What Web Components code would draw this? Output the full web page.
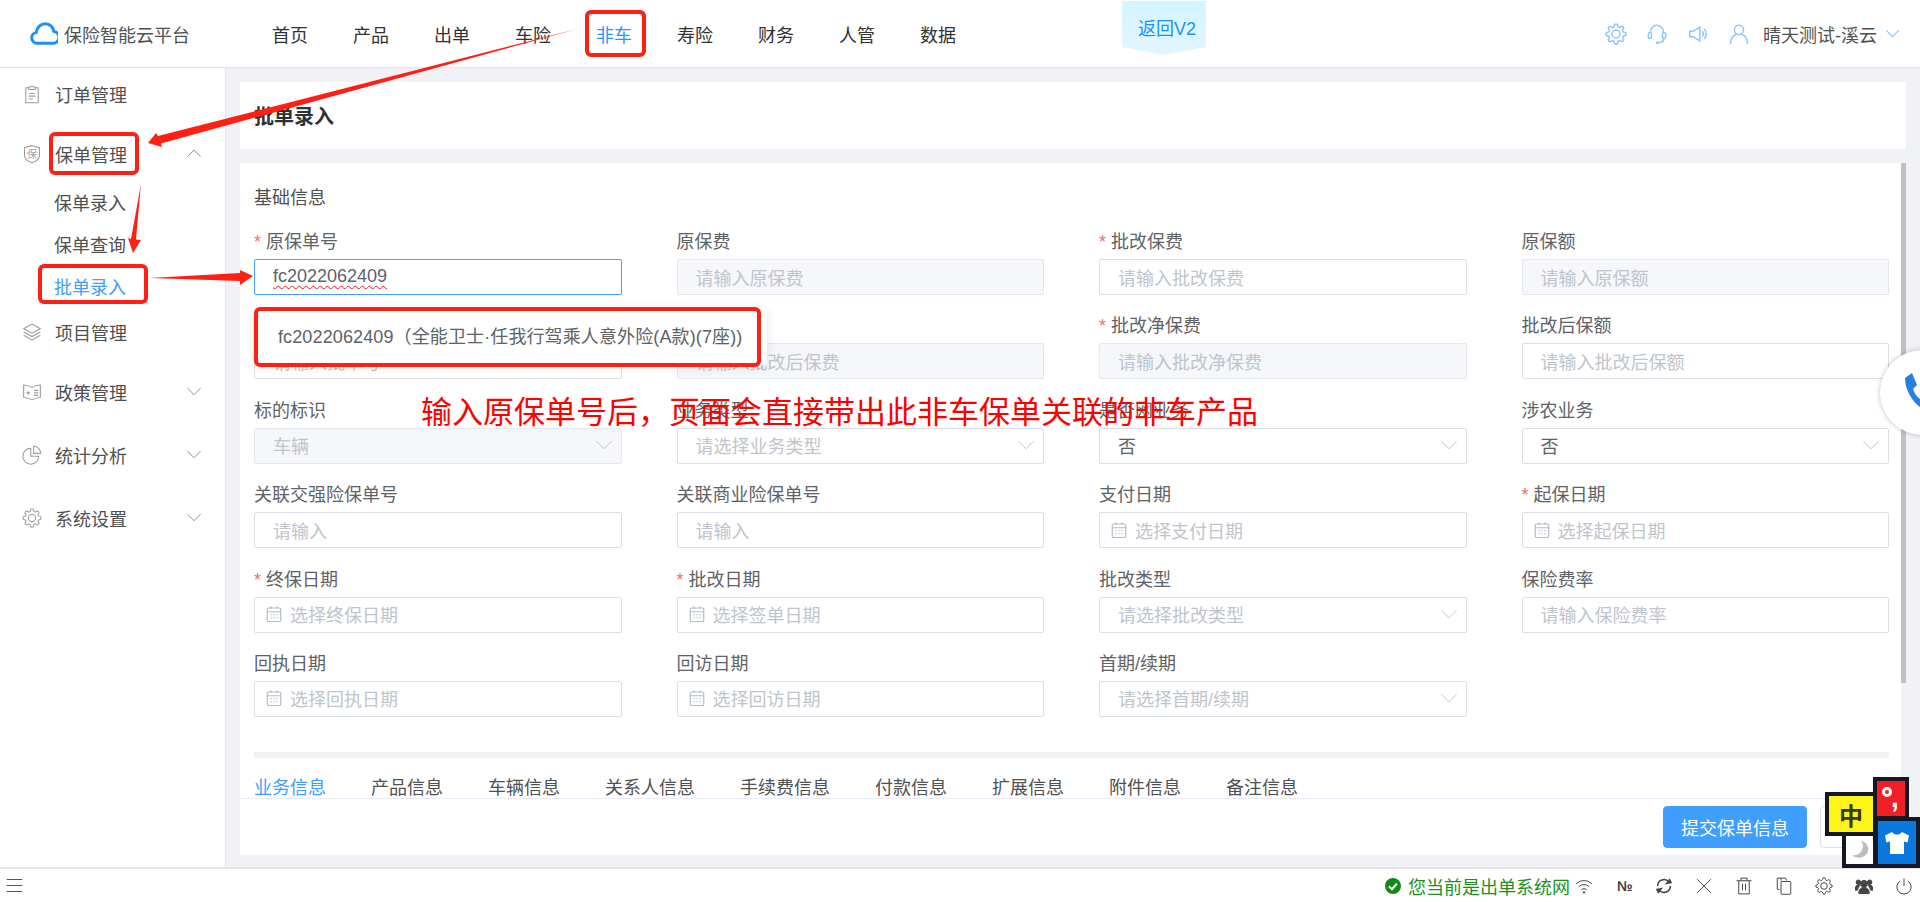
<!DOCTYPE html>
<html lang="zh">
<head>
<meta charset="utf-8">
<title>批单录入</title>
<style>
    html, body { margin: 0; height: 100%; overflow: hidden; }
    body {
        font-family: "Liberation Sans", "Noto Sans CJK SC", sans-serif;
        font-size: 18px;
        color: #606266;
        background: #fff;
    }
</style>
</head>
<body>
<app-shell>
    <app-header slot="header"></app-header>
    <side-menu slot="menu"></side-menu>
    <page-title slot="title">批单录入</page-title>
    <form-card slot="form">
        <form-field req focus value="fc2022062409">原保单号</form-field>
        <form-field disabled placeholder="请输入原保费">原保费</form-field>
        <form-field req placeholder="请输入批改保费">批改保费</form-field>
        <form-field disabled placeholder="请输入原保额">原保额</form-field>

        <form-field placeholder="请输入批单号">批单号</form-field>
        <form-field disabled placeholder="请输入批改后保费">批改后保费</form-field>
        <form-field req disabled placeholder="请输入批改净保费">批改净保费</form-field>
        <form-field placeholder="请输入批改后保额">批改后保额</form-field>

        <form-field type="select" disabled placeholder="车辆">标的标识</form-field>
        <form-field type="select" placeholder="请选择业务类型">业务类型</form-field>
        <form-field type="select" value="否">是否网业务</form-field>
        <form-field type="select" value="否">涉农业务</form-field>

        <form-field placeholder="请输入">关联交强险保单号</form-field>
        <form-field placeholder="请输入">关联商业险保单号</form-field>
        <form-field type="date" placeholder="选择支付日期">支付日期</form-field>
        <form-field req type="date" placeholder="选择起保日期">起保日期</form-field>

        <form-field req type="date" placeholder="选择终保日期">终保日期</form-field>
        <form-field req type="date" placeholder="选择签单日期">批改日期</form-field>
        <form-field type="select" placeholder="请选择批改类型">批改类型</form-field>
        <form-field placeholder="请输入保险费率">保险费率</form-field>

        <form-field type="date" placeholder="选择回执日期">回执日期</form-field>
        <form-field type="date" placeholder="选择回访日期">回访日期</form-field>
        <form-field type="select" placeholder="请选择首期/续期">首期/续期</form-field>
    </form-card>
    <status-bar slot="status"></status-bar>
</app-shell>
<suggest-popup>fc2022062409（全能卫士·任我行驾乘人意外险(A款)(7座))</suggest-popup>
<call-bubble></call-bubble>
<ime-widget></ime-widget>
<red-notes>输入原保单号后，页面会直接带出此非车保单关联的非车产品</red-notes>

<script>
const GEAR = 'M19.4 15a1.65 1.65 0 00.33 1.82l.06.06a2 2 0 010 2.83 2 2 0 01-2.83 0l-.06-.06a1.65 1.65 0 00-1.82-.33 1.65 1.65 0 00-1 1.51V21a2 2 0 01-2 2 2 2 0 01-2-2v-.09A1.65 1.65 0 009 19.4a1.65 1.65 0 00-1.82.33l-.06.06a2 2 0 01-2.83 0 2 2 0 010-2.83l.06-.06a1.65 1.65 0 00.33-1.82 1.65 1.65 0 00-1.51-1H3a2 2 0 01-2-2 2 2 0 012-2h.09A1.65 1.65 0 004.6 9a1.65 1.65 0 00-.33-1.82l-.06-.06a2 2 0 010-2.83 2 2 0 012.83 0l.06.06a1.65 1.65 0 001.82.33H9a1.65 1.65 0 001-1.51V3a2 2 0 012-2 2 2 0 012 2v.09a1.65 1.65 0 001 1.51 1.65 1.65 0 001.82-.33l.06-.06a2 2 0 012.83 0 2 2 0 010 2.83l-.06.06a1.65 1.65 0 00-.33 1.82V9a1.65 1.65 0 001.51 1H21a2 2 0 012 2 2 2 0 01-2 2h-.09a1.65 1.65 0 00-1.51 1z';

const ICONS = {
    gear: `<path d="${GEAR}"/><circle cx="12" cy="12" r="4.4"/>`,
    headset: `<path d="M5 11V9.5a7 7 0 0114 0V11"/><rect x="2.5" y="10.5" width="3.5" height="6.5" rx="1.7"/><rect x="18" y="10.5" width="3.5" height="6.5" rx="1.7"/><path d="M19.5 17c0 3-2.5 4.5-6 4.5"/><circle cx="12.5" cy="21.5" r=".8"/>`,
    speaker: `<path d="M3 9h4l7-4.5v15L7 15H3z"/><path d="M16.5 9a4.5 4.5 0 010 6"/><path d="M18.8 6.500a8 8 0 010 11"/>`,
    user: `<circle cx="12" cy="7.5" r="5"/><path d="M2.500 23c.5-6 3-9.500 6.200-10.500M21.500 23c-.5-6-3-9.500-6.200-10.500"/>`,
    down: `<path d="M2 7l10 10L22 7"/>`,
    up: `<path d="M2 17L12 7l10 10"/>`,
    clip: `<path d="M8 4.5H4.500v18h15v-18H16"/><path d="M8 6.500V3.500h2.500a1.700 1.700 0 013 0H16v3z"/><path d="M8 11h8M8 14.5h8M8 18h5"/>`,
    shield: `<path d="M12 2l9 2.500v9.500c0 4-5 7-9 8.500-4-1.500-9-4.500-9-8.500V4.500z"/><text x="12" y="16.500" font-size="12" text-anchor="middle" fill="currentColor" stroke="none">保</text>`,
    layers: `<path d="M12 2.500l10 5.500-10 5.500L2 8z"/><path d="M2 12l10 5.500L22 12"/><path d="M2 16l10 5.500L22 16"/>`,
    book: `<path d="M2 3.500c4 0 7 1 10 3 3-2 6-3 10-3v15c-4 0-7 1-10 3-3-2-6-3-10-3z"/><path d="M14.500 10h5M14.500 13h5M14.500 16h5"/><path d="M7.500 10.500l.8 1.600 1.700.2-1.200 1.200.3 1.700-1.600-.8-1.600.8.3-1.700L5 12.300l1.700-.2z" fill="currentColor" stroke="none"/>`,
    pie: `<path d="M10.500 4a9.500 9.500 0 109.500 9.500h-9.500z"/><path d="M14 1.500a8.500 8.500 0 018.500 8.500H14z"/>`,
    calendar: `<rect x="3" y="4" width="18" height="18" rx="1.500"/><path d="M3 9h18M8 1.500V5M16 1.500V5M7 13h2M11 13h2M15 13h2M7 17h2M11 17h2M15 17h2"/>`,
    menu: `<path d="M1 3.500h22M1 12h22M1 20.500h22"/>`,
    wifi: `<path d="M1.500 9a15 15 0 0121 0M5 13a10 10 0 0114 0M8.500 17a5 5 0 017 0"/><circle cx="12" cy="20.500" r="1" fill="currentColor"/>`,
    refresh: `<path d="M3.500 12a8.500 8.500 0 0115-5.500"/><path d="M20.500 12a8.500 8.500 0 01-15 5.500"/><path d="M21.500 7.500l-6 1 4-5z" fill="currentColor"/><path d="M2.500 16.500l6-1-4 5z" fill="currentColor"/>`,
    close: `<path d="M3 3l18 18M21 3L3 21"/>`,
    trash: `<path d="M2 5h20M5 5v17.500h14V5"/><path d="M8 5V1.500h8V5"/><path d="M10 9v9M14 9v9"/>`,
    copy: `<path d="M8 5V1.500H3v15h3"/><path d="M8 1.500h6l1.500 3"/><rect x="8" y="6" width="13" height="17" rx="1"/>`,
    power: `<path d="M12 2v10"/><path d="M6.500 5.500a9.500 9.500 0 1011 0"/>`,
    group: `<circle cx="12" cy="9" r="4.500" fill="currentColor"/><circle cx="4.500" cy="7" r="3" fill="currentColor"/><circle cx="19.500" cy="7" r="3" fill="currentColor"/><path d="M5 22c0-5 2.500-8 7-8s7 3 7 8z" fill="currentColor"/><path d="M0 17c0-4 1.500-6.500 5-6.500 1 0 1.500.3 2 .6C5 13 3.500 15 3.500 17.500H0zM24 17c0-4-1.500-6.500-5-6.500-1 0-1.500.3-2 .6 2 1.900 3.500 3.900 3.500 6.400H24z" fill="currentColor"/>`
};

const icon = (name, size, width = 1.5) =>
    `<svg width="${size}" height="${size}" viewBox="0 0 24 24" fill="none" stroke="currentColor" stroke-width="${width}" style="display:block;flex:none">${ICONS[name]}</svg>`;

class AppShell extends HTMLElement {
    constructor() {
        super();
        this.attachShadow({mode: 'open'});
        this.shadowRoot.innerHTML = `
            <style>
                :host { display: flex; flex-direction: column; height: 902px; }
                .middle { flex: 1; display: flex; min-height: 0; }
                main {
                    flex: 1;
                    min-width: 0;
                    display: flex;
                    flex-direction: column;
                    gap: 14px;
                    padding: 14px 14px 12px 14px;
                    background: #f0f2f5;
                }
            </style>
            <slot name="header"></slot>
            <div class="middle">
                <slot name="menu"></slot>
                <main>
                    <slot name="title"></slot>
                    <slot name="form"></slot>
                </main>
            </div>
            <slot name="status"></slot>`;
    }
}

class AppHeader extends HTMLElement {
    constructor() {
        super();
        this.attachShadow({mode: 'open'});
        const nav = ['首页', '产品', '出单', '车险', '非车', '寿险', '财务', '人管', '数据'];
        this.shadowRoot.innerHTML = `
            <style>
                :host {
                    display: flex;
                    align-items: center;
                    position: relative;
                    height: 67px;
                    border-bottom: 1px solid #e6e6e6;
                    box-sizing: content-box;
                    background: #fff;
                    padding: 0 20px 0 30px;
                    color: #303133;
                }
                .logo { display: flex; align-items: center; gap: 6px; width: 242px; flex: none; color: #505050; }
                nav { display: flex; gap: 45px; }
                nav span.on { color: #2a96fb; }
                .back {
                    position: absolute;
                    left: 1122px;
                    top: 1px;
                    width: 84px;
                    height: 54px;
                    box-sizing: border-box;
                    padding-left: 6px;
                    background: linear-gradient(#d3f5ff, #e4f6ff);
                    clip-path: polygon(0 0, 100% 0, 100% 85%, 50% 100%, 0 85%);
                    color: #1890ff;
                    text-align: center;
                    line-height: 56px;
                    font-size: 18px;
                }
                .right { margin-left: auto; display: flex; align-items: center; color: #8fc4ff; }
                .right svg + svg { margin-left: 19px; }
                .name { color: #505050; margin: 0 8px 0 13px; white-space: nowrap; }
            </style>
            <div class="logo">
                <svg width="28" height="23" viewBox="0 0 28 23" fill="none" stroke="#1890ff" stroke-width="3" style="flex:none">
                    <path d="M7 21.300a5.500 5.500 0 01-.8-10.900C7 5.300 10.800 1.700 15.200 1.700c4.400 0 8 3.300 8.500 7.500a6.100 6.100 0 01-1.700 12.100z"/>
                </svg>
                <span>保险智能云平台</span>
            </div>
            <nav>${nav.map(n => `<span class="${n === '非车' ? 'on' : ''}">${n}</span>`).join('')}</nav>
            <div class="back">返回V2</div>
            <div class="right">
                ${icon('gear', 22, 1.6)}${icon('headset', 22, 1.6)}${icon('speaker', 22, 1.6)}${icon('user', 22, 1.6)}
                <span class="name">晴天测试-溪云</span>
                ${icon('down', 15, 1.8).replace('style="', 'style="margin-left:0;')}
            </div>`;
    }
}

class SideMenu extends HTMLElement {
    constructor() {
        super();
        this.attachShadow({mode: 'open'});
        const row = (name, text, arrow, h, top) => `
            <div class="row" style="height:${h}px;margin-top:${top}px">
                <span class="ic">${icon(name, 20, 1.3)}</span>
                <span>${text}</span>
                ${arrow ? `<span class="ar">${icon(arrow, 16, 1.5)}</span>` : ''}
            </div>`;
        this.shadowRoot.innerHTML = `
            <style>
                :host {
                    display: block;
                    width: 225px;
                    flex: none;
                    box-sizing: content-box;
                    border-right: 1px solid #e6e6e6;
                    background: #fff;
                    color: #505050;
                }
                .row { display: flex; align-items: center; position: relative; padding: 0 0 2px 22px; box-sizing: border-box; }
                .ic { width: 33px; color: #9a9da3; }
                .ar { position: absolute; left: 186px; top: 50%; transform: translateY(-60%); color: #909399; }
                .sub { height: 42px; line-height: 44px; padding-left: 54px; }
                .sub.on { color: #409eff; }
            </style>
            ${row('clip', '订单管理', '', 54, 0)}
            ${row('shield', '保单管理', 'up', 54, 6)}
            <div class="sub">保单录入</div>
            <div class="sub">保单查询</div>
            <div class="sub on">批单录入</div>
            ${row('layers', '项目管理', '', 50, 0)}
            ${row('book', '政策管理', 'down', 50, 10)}
            ${row('pie', '统计分析', 'down', 50, 13)}
            ${row('gear', '系统设置', 'down', 50, 13)}`;
    }
}

class PageTitle extends HTMLElement {
    constructor() {
        super();
        this.attachShadow({mode: 'open'});
        this.shadowRoot.innerHTML = `
            <style>
                :host {
                    display: flex;
                    align-items: center;
                    height: 67px;
                    padding-left: 14px;
                    background: #fff;
                    font-size: 20px;
                    font-weight: bold;
                    color: #303133;
                }
            </style>
            <slot></slot>`;
    }
}

class FormCard extends HTMLElement {
    constructor() {
        super();
        this.attachShadow({mode: 'open'});
        const tabs = ['业务信息', '产品信息', '车辆信息', '关系人信息', '手续费信息', '付款信息', '扩展信息', '附件信息', '备注信息'];
        this.shadowRoot.innerHTML = `
            <style>
                :host { display: flex; flex-direction: column; height: 692px; background: #fff; position: relative; }
                .scroll { flex: 1; min-height: 0; overflow: hidden; padding: 23px 17px 0 14px; }
                .thumb { position: absolute; top: 0; right: 0; width: 5px; height: 520px; background: #c1c1c1; }
                .track { position: absolute; top: 0; right: 0; bottom: 0; width: 5px; background: #f1f1f1; }
                .head { line-height: 24px; margin-bottom: 19px; color: #505050; }
                .grid { display: grid; grid-template-columns: repeat(4, 1fr); column-gap: 55px; row-gap: 18.4px; }
                .bar { height: 6px; margin-top: 35px; background: #f0f2f5; }
                .tabs { display: flex; gap: 45px; margin-top: 18px; line-height: 24px; color: #505050; }
                .tabs .on { color: #409eff; }
                footer {
                    flex: none;
                    height: 56px;
                    border-top: 1px solid #ebebf8;
                    display: flex;
                    justify-content: flex-end;
                    align-items: center;
                    gap: 13px;
                    overflow: hidden;
                }
                button {
                    font: inherit;
                    height: 42px;
                    border-radius: 4px;
                    border: 1px solid #dcdfe6;
                    background: #fff;
                    color: #606266;
                    padding: 0;
                    white-space: nowrap;
                    flex: none;
                }
                button.primary { width: 144px; background: #409eff; border-color: #409eff; color: #fff; }
                button.plain { width: 86px; }
            </style>
            <div class="track"></div>
            <div class="thumb"></div>
            <div class="scroll">
                <div class="head">基础信息</div>
                <div class="grid"><slot></slot></div>
                <div class="bar"></div>
                <div class="tabs">${tabs.map((t, i) => `<span class="${i ? '' : 'on'}">${t}</span>`).join('')}</div>
            </div>
            <footer>
                <button class="primary">提交保单信息</button>
                <button class="plain">取消</button>
            </footer>`;
    }
}

class FormField extends HTMLElement {
    constructor() {
        super();
        this.attachShadow({mode: 'open'});
    }

    connectedCallback() {
        const value = this.getAttribute('value');
        const text = value || this.getAttribute('placeholder') || '';
        const type = this.getAttribute('type');
        const disabled = this.hasAttribute('disabled');
        const focus = this.hasAttribute('focus');

        this.shadowRoot.innerHTML = `
            <style>
                :host { display: block; min-width: 0; }
                .label { display: flex; height: 25px; line-height: 26px; margin-bottom: 5px; color: #606266; }
                .star { width: 12px; color: #f56c6c; flex: none; }
                .box {
                    display: flex;
                    align-items: center;
                    height: 36px;
                    box-sizing: border-box;
                    border: 1px solid #dcdfe6;
                    border-radius: 2px;
                    padding: 0 8px 1px 18px;
                    background: #fff;
                    color: #c0c4cc;
                    white-space: nowrap;
                }
                .box.date { padding-left: 10px; gap: 7px; }
                .box.disabled { background: #f5f7fa; border-color: #e4e7ed; }
                .box.focus { border-color: #409eff; }
                .val { color: #606266; }
                .focus .val { text-decoration: underline wavy #f01818 1px; text-underline-offset: 3px; }
                .arrow { margin-left: auto; color: #c0c4cc; }
                .cal { color: #b4bccc; }
            </style>
            <div class="label">
                ${this.hasAttribute('req') ? '<span class="star">*</span>' : ''}
                <span><slot></slot></span>
            </div>
            <div class="box ${type === 'date' ? 'date' : ''} ${disabled ? 'disabled' : ''} ${focus ? 'focus' : ''}">
                ${type === 'date' ? `<span class="cal">${icon('calendar', 18, 1.6)}</span>` : ''}
                <span class="${value ? 'val' : ''}">${text}</span>
                ${type === 'select' ? `<span class="arrow">${icon('down', 18, 1.3)}</span>` : ''}
            </div>`;
    }
}

class SuggestPopup extends HTMLElement {
    constructor() {
        super();
        this.attachShadow({mode: 'open'});
        this.shadowRoot.innerHTML = `
            <style>
                :host {
                    position: absolute;
                    left: 255px;
                    top: 308px;
                    width: 512px;
                    height: 57px;
                    box-sizing: border-box;
                    padding-left: 23px;
                    letter-spacing: .12px;
                    line-height: 58px;
                    background: #fff;
                    border-radius: 4px;
                    box-shadow: 0 2px 12px rgba(0, 0, 0, .1);
                    color: #606266;
                    white-space: nowrap;
                }
            </style>
            <slot></slot>`;
    }
}

class CallBubble extends HTMLElement {
    constructor() {
        super();
        this.attachShadow({mode: 'open'});
        this.shadowRoot.innerHTML = `
            <style>
                :host {
                    position: absolute;
                    left: 1880px;
                    top: 350px;
                    width: 85px;
                    height: 85px;
                    border-radius: 50%;
                    background: #fff;
                    box-shadow: 0 0 5px rgba(0, 0, 0, .25);
                }
                svg { display: block; }
            </style>
            <svg width="85" height="85" viewBox="0 0 85 85">
                <path fill="#2a7de1" d="M25 28l7-5 5 12-4 4c2 5 4 8 7 10v8C32 51 25 40 25 28z"/>
            </svg>`;
    }
}

class ImeWidget extends HTMLElement {
    constructor() {
        super();
        this.attachShadow({mode: 'open'});
        this.shadowRoot.innerHTML = `
            <style>
                :host { position: absolute; left: 1825px; top: 777px; width: 95px; height: 91px; }
                .cell { position: absolute; box-sizing: border-box; border: 4px solid #141826; display: flex; align-items: center; justify-content: center; }
                .zh { left: 0; top: 15px; width: 52px; height: 44px; background: #fff31c; color: #3a3810; font-size: 24px; font-weight: bold; }
                .dot { left: 48px; top: 0; width: 36px; height: 43px; background: #f01f28; }
                .moon { left: 17px; top: 55px; width: 35px; height: 36px; background: #fff; }
                .skin { left: 49px; top: 40px; width: 46px; height: 51px; background: #0a78dc; }
                .comma { position: absolute; left: 14px; top: 3px; color: #fff; font-size: 28px; font-weight: bold; line-height: 28px; }
            </style>
            <div class="cell dot">
                <svg width="28" height="36" viewBox="0 0 28 36" style="position:absolute;left:0;top:0"><circle cx="10" cy="11" r="3.5" fill="none" stroke="#fff" stroke-width="3"/></svg>
                <span class="comma">,</span>
            </div>
            <div class="cell zh">中</div>
            <div class="cell skin">
                <svg width="26" height="24" viewBox="0 0 26 24"><path fill="#fff" d="M8 1c1.500 2 3 2.500 5 2.500S16.500 3 18 1l7 3.500-1.500 7-3.500-1V23H6V10.500l-3.500 1L1 4.500z"/></svg>
            </div>
            <div class="cell moon">
                <svg width="20" height="20" viewBox="0 0 20 20"><path fill="#bdbdbd" d="M11 1c5 1 8 5 7 10s-7 8-13 6c-1-.5-2-1-3-2 5 1 8-1 10-5s1-6-1-9z"/></svg>
            </div>`;
    }
}

class StatusBar extends HTMLElement {
    constructor() {
        super();
        this.attachShadow({mode: 'open'});
        const tools = ['refresh', 'close', 'trash', 'copy', 'gear', 'group', 'power'];
        this.shadowRoot.innerHTML = `
            <style>
                :host {
                    display: flex;
                    align-items: center;
                    flex: none;
                    height: 35px;
                    box-sizing: border-box;
                    border-top: 2px solid #e4e4e4;
                    padding: 0 7px 0 6px;
                    background: #fff;
                    color: #444;
                }
                .left { color: #555; }
                .ok { margin-left: auto; display: flex; align-items: center; gap: 7px; color: #1c901c; white-space: nowrap; }
                .wifi { margin-left: 5px; }
                .no { width: 38px; margin-left: 24px; font-size: 14px; font-weight: bold; white-space: nowrap; }
                .tools { display: flex; gap: 22px; }
            </style>
            <span class="left">${icon('menu', 17, 1.5)}</span>
            <div class="ok">
                <svg width="16" height="16" viewBox="0 0 16 16"><circle cx="8" cy="8" r="8" fill="#118a11"/><path d="M4 8.200l3 3 5-5.700" fill="none" stroke="#fff" stroke-width="2"/></svg>
                <span>您当前是出单系统网</span>
            </div>
            <span class="wifi">${icon('wifi', 18, 1.3)}</span>
            <span class="no">№</span>
            <div class="tools">${tools.map(t => icon(t, 18, t === 'refresh' ? 2 : 1.3)).join('')}</div>`;
    }
}

class RedNotes extends HTMLElement {
    constructor() {
        super();
        this.attachShadow({mode: 'open'});
        this.shadowRoot.innerHTML = `
            <style>
                :host { position: absolute; left: 0; top: 0; width: 1920px; height: 902px; pointer-events: none; }
                svg { position: absolute; left: 0; top: 0; }
                rect { fill: none; stroke: #ff2015; stroke-width: 4; }
                polygon { fill: #ff2015; }
                p {
                    position: absolute;
                    left: 421px;
                    top: 391px;
                    margin: 0;
                    font-size: 31px;
                    line-height: 44px;
                    color: #ff0000;
                    white-space: nowrap;
                }
            </style>
            <svg width="1920" height="902">
                <rect x="587" y="12" width="57" height="43" rx="4"/>
                <rect x="51" y="134" width="86" height="39" rx="4"/>
                <rect x="40" y="266" width="106" height="36" rx="4"/>
                <rect x="256" y="309" width="503" height="56" rx="4"/>
                <polygon points="577,29 158,136 156,133 148,143 162,147 161,143.500"/>
                <polygon points="141,184 136,239.500 141,240 133,253 128,238 131,239"/>
                <polygon points="149,278 240,273 240,270 253,276 240,285 240,281"/>
            </svg>
            <p><slot></slot></p>`;
    }
}

customElements.define('app-shell', AppShell);
customElements.define('app-header', AppHeader);
customElements.define('side-menu', SideMenu);
customElements.define('page-title', PageTitle);
customElements.define('form-card', FormCard);
customElements.define('form-field', FormField);
customElements.define('suggest-popup', SuggestPopup);
customElements.define('call-bubble', CallBubble);
customElements.define('ime-widget', ImeWidget);
customElements.define('status-bar', StatusBar);
customElements.define('red-notes', RedNotes);
</script>
</body>
</html>
